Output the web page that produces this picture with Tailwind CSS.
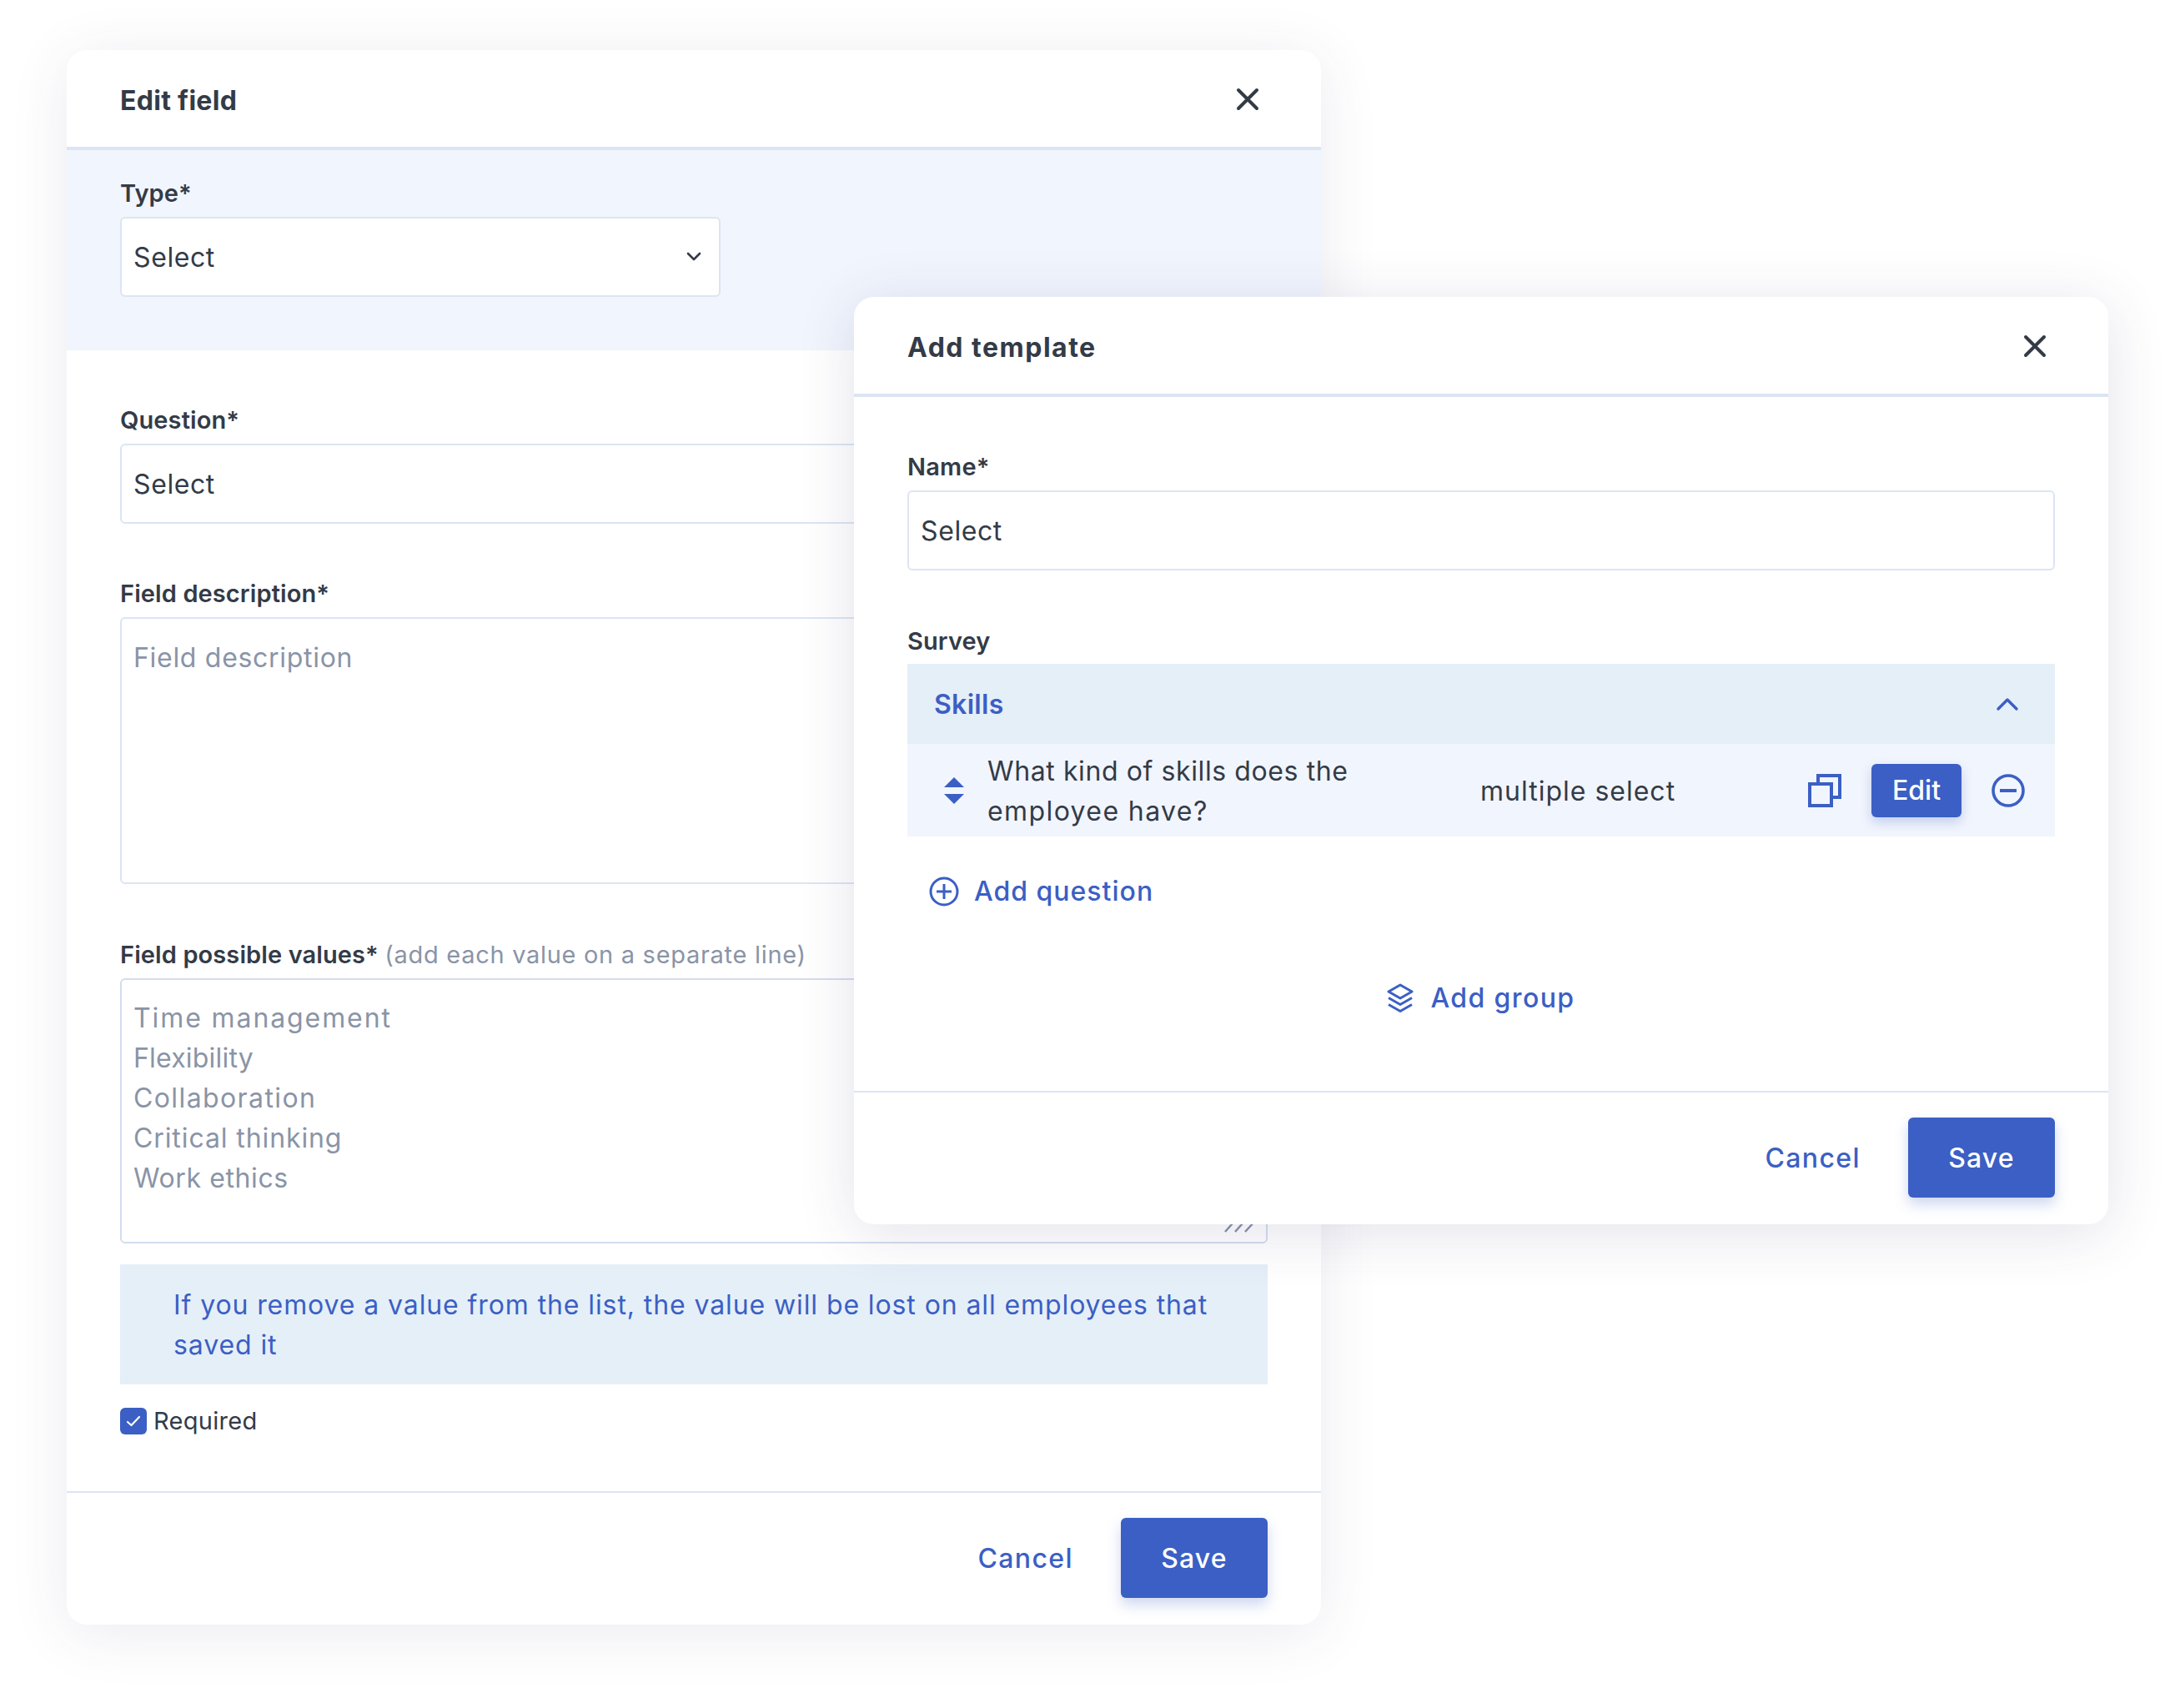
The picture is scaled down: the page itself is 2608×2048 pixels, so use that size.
<!DOCTYPE html>
<html lang="en">
<head>
    <meta charset="UTF-8">
    <title>Edit field / Add template</title>
    <script src="https://cdn.jsdelivr.net/npm/@tailwindcss/browser@4"></script>
</head>
<body class="bg-white">
<div class="relative w-[2608px] h-[2048px] overflow-hidden font-['Inter',sans-serif] text-[32px] leading-[48px] tracking-[0.9px] text-[#333b47]">

    <!-- Edit field modal -->
    <div class="absolute left-[80px] top-[60px] w-[1504px] h-[1888px] flex flex-col bg-white rounded-[24px] shadow-[0_10px_70px_rgba(60,60,110,0.1)]">
        <div class="h-[120px] shrink-0 flex items-center justify-between pl-[64px] pr-[72px] border-b-4 border-[#dbe5f3]">
            <h2 class="pt-[6px] text-[32px] font-bold tracking-[0.3px]">Edit field</h2>
            <svg class="w-[32px] h-[32px] mt-[2px]" viewBox="0 0 32 32" fill="none" stroke="#333b47" stroke-width="4" stroke-linecap="round"><path d="M5 5l22 22M27 5L5 27"/></svg>
        </div>

        <!-- Type -->
        <div class="bg-[#f1f5fd] px-[64px] pt-[28px] pb-[64px]">
            <label class="block text-[29px] font-semibold tracking-[0.1px] mb-[4px]">Type*</label>
            <div class="w-[720px] h-[96px] flex items-center justify-between pl-[14px] pr-[20px] bg-white border-2 border-[#dbe5f3] rounded-[6px]">
                <span class="pt-[2px] tracking-[0.6px]">Select</span>
                <svg class="w-[20px] h-[12px]" viewBox="0 0 20 12" fill="none" stroke="#333b47" stroke-width="2.6" stroke-linecap="round" stroke-linejoin="round"><path d="M3 2l7 7 7-7"/></svg>
            </div>
        </div>

        <div class="flex-1 flex flex-col px-[64px] pt-[60px]">
            <label class="block text-[29px] font-semibold tracking-[0.1px] mb-[4px]">Question*</label>
            <div class="h-[96px] flex items-center pl-[14px] pt-[2px] tracking-[0.6px] border-2 border-[#dbe5f3] rounded-[6px]">Select</div>

            <label class="block mt-[60px] text-[29px] font-semibold tracking-[0.1px] mb-[4px]">Field description*</label>
            <div class="h-[320px] pl-[14px] pt-[23px] tracking-[0.7px] border-2 border-[#dbe5f3] rounded-[6px] text-[#8a94a6]">Field description</div>

            <label class="block mt-[61px] text-[29px] font-semibold tracking-[0.1px] mb-[4px]">Field possible values* <span class="font-normal tracking-[0.7px] text-[#8a94a6]">(add each value on a separate line)</span></label>
            <div class="relative h-[318px] pl-[14px] pt-[22px] border-2 border-[#d3dcef] rounded-[6px] text-[#8a94a6]">
                <p class="tracking-[1.9px]">Time management</p>
                <p class="tracking-[0.2px]">Flexibility</p>
                <p class="tracking-[1.4px]">Collaboration</p>
                <p>Critical thinking</p>
                <p class="tracking-[0.6px]">Work ethics</p>
                <svg class="absolute right-[12px] bottom-[11px] w-[38px] h-[20px]" viewBox="0 0 38 20" fill="none" stroke="#8791ab" stroke-width="2.5"><path d="M1 19L17 1M13 19L29 1M25 19L37 6"/></svg>
            </div>

            <div class="mt-[25px] h-[144px] flex items-center px-[64px] pt-[2px] bg-[#e5eff8] text-[#3b5fc4]">If you remove a value from the list, the value will be lost on all employees that saved it</div>

            <div class="mt-[20px] flex items-center gap-[8px] text-[29px] tracking-[0.3px]">
                <span class="w-[32px] h-[32px] flex items-center justify-center rounded-[6px] bg-[#3b5fc4]">
                    <svg class="w-[20px] h-[16px]" viewBox="0 0 20 16" fill="none" stroke="white" stroke-width="2.2" stroke-linecap="round" stroke-linejoin="round"><path d="M3 9l4.5 4L17 3"/></svg>
                </span>
                Required
            </div>
        </div>

        <div class="h-[160px] shrink-0 flex items-center justify-end gap-[57px] px-[64px] pb-[2px] border-t-2 border-[#dbe5f3]">
            <button class="pt-[2px] font-medium tracking-[1.4px] text-[#3b5fc4]">Cancel</button>
            <button class="w-[176px] h-[96px] pt-[2px] rounded-[6px] bg-[#3b5fc4] text-white font-medium tracking-[1.2px] shadow-[0_8px_16px_rgba(59,95,196,0.25)]">Save</button>
        </div>
    </div>

    <!-- Add template modal -->
    <div class="absolute left-[1024px] top-[356px] w-[1504px] h-[1112px] flex flex-col bg-white rounded-[24px] shadow-[0_10px_70px_rgba(60,60,110,0.14)]">
        <div class="h-[120px] shrink-0 flex items-center justify-between pl-[64px] pr-[72px] border-b-4 border-[#dbe5f3]">
            <h2 class="pt-[6px] text-[32px] font-bold tracking-[1.5px]">Add template</h2>
            <svg class="w-[32px] h-[32px] mt-[2px]" viewBox="0 0 32 32" fill="none" stroke="#333b47" stroke-width="4" stroke-linecap="round"><path d="M5 5l22 22M27 5L5 27"/></svg>
        </div>

        <div class="flex-1 flex flex-col px-[64px] pt-[60px]">
            <label class="block text-[29px] font-semibold tracking-[0.2px] mb-[4px]">Name*</label>
            <div class="h-[96px] flex items-center pl-[14px] pt-[2px] tracking-[0.6px] border-2 border-[#dbe5f3] rounded-[6px]">Select</div>

            <label class="block mt-[61px] text-[29px] font-semibold tracking-[0.1px] mb-[3px]">Survey</label>
            <div class="h-[96px] flex items-center justify-between pl-[32px] pr-[43px] bg-[#e5eff8] text-[#3b5fc4] font-semibold tracking-[0.3px]">
                <span class="pt-[1px]">Skills</span>
                <svg class="w-[28px] h-[18px]" viewBox="0 0 28 18" fill="none" stroke="#3b5fc4" stroke-width="3.4" stroke-linecap="round" stroke-linejoin="round"><path d="M3 15L14 4l11 11"/></svg>
            </div>

            <!-- Question row -->
            <div class="h-[111px] flex items-center bg-[#f1f5fd]">
                <div class="ml-[44px] w-[24px] flex flex-col items-center gap-[8px]">
                    <span class="w-0 h-0 border-x-[12px] border-x-transparent border-b-[12px] border-b-[#3b5fc4]"></span>
                    <span class="w-0 h-0 border-x-[12px] border-x-transparent border-t-[12px] border-t-[#3b5fc4]"></span>
                </div>
                <p class="ml-[28px] w-[591px] pt-[2px] tracking-[0.6px]">What kind of skills does the<br><span class="tracking-[1.4px]">employee have?</span></p>
                <span class="w-[393px] pt-[2px] tracking-[1px]">multiple select</span>
                <svg class="w-[40px] h-[40px]" viewBox="0 0 40 40" fill="none" stroke="#3b5fc4" stroke-width="4"><rect x="2" y="12" width="26" height="26"/><path d="M12 10V2h26v26h-8"/></svg>
                <button class="ml-[36px] w-[108px] h-[64px] rounded-[6px] bg-[#3b5fc4] text-white font-medium tracking-normal shadow-[0_6px_14px_rgba(59,95,196,0.25)]">Edit</button>
                <svg class="ml-[36px] w-[40px] h-[40px]" viewBox="0 0 40 40" fill="none" stroke="#3b5fc4" stroke-width="3.6"><circle cx="20" cy="20" r="18"/><path stroke-width="4" d="M10 20h20"/></svg>
            </div>

            <div class="mt-[42px] ml-[26px] flex items-center gap-[18px] font-medium tracking-[1px] text-[#3b5fc4]">
                <svg class="w-[36px] h-[36px]" viewBox="0 0 36 36" fill="none" stroke="#3b5fc4" stroke-width="3"><circle cx="18" cy="18" r="16"/><path d="M18 9v18M9 18h18"/></svg>
                Add question
            </div>

            <div class="mt-[80px] flex items-center justify-center gap-[20px] font-medium tracking-[1.4px] text-[#3b5fc4]">
                <svg class="w-[32px] h-[36px]" viewBox="0 0 32 36" fill="none" stroke="#3b5fc4" stroke-width="3" stroke-linejoin="round"><path d="M16 2L30 10 16 18 2 10z"/><path d="M2 17.5l14 8 14-8M2 25.5l14 8 14-8"/></svg>
                Add group
            </div>
        </div>

        <div class="h-[160px] shrink-0 flex items-center justify-end gap-[57px] px-[64px] pb-[2px] border-t-2 border-[#dbe5f3]">
            <button class="pt-[2px] font-medium tracking-[1.4px] text-[#3b5fc4]">Cancel</button>
            <button class="w-[176px] h-[96px] pt-[2px] rounded-[6px] bg-[#3b5fc4] text-white font-medium tracking-[1.2px] shadow-[0_8px_16px_rgba(59,95,196,0.25)]">Save</button>
        </div>
    </div>
</div>
</body>
</html>
